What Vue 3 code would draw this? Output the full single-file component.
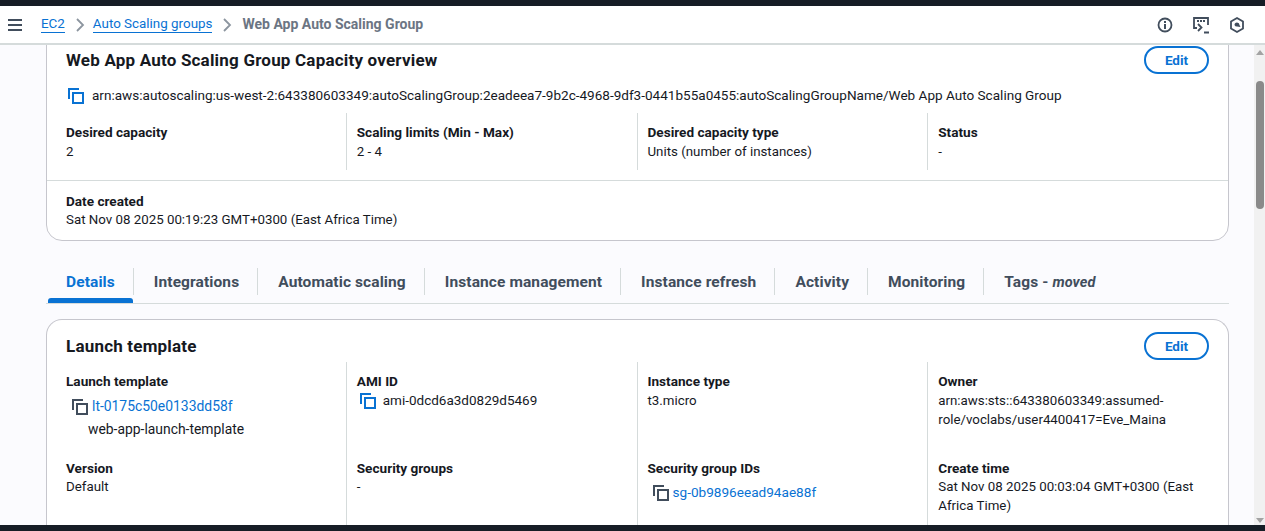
<script setup>
const overview = [
  { label: "Desired capacity", value: "2" },
  { label: "Scaling limits (Min - Max)", value: "2 - 4" },
  { label: "Desired capacity type", value: "Units (number of instances)" },
  { label: "Status", value: "-" },
];

const tabs = [
  "Details",
  "Integrations",
  "Automatic scaling",
  "Instance management",
  "Instance refresh",
  "Activity",
  "Monitoring",
];
</script>

<template>
  <div class="page">
    <div class="strip"></div>

    <header class="nav">
      <svg class="burger" width="16" height="16" viewBox="0 0 16 16">
        <path d="M1 3h14M1 8h14M1 13h14" stroke="#414d5c" stroke-width="2" fill="none" />
      </svg>
      <a class="crumb">EC2</a>
      <svg class="chev" width="16" height="16" viewBox="0 0 16 16">
        <path d="M5 2l6 6-6 6" stroke="#8c959f" stroke-width="1.800" fill="none" />
      </svg>
      <a class="crumb">Auto Scaling groups</a>
      <svg class="chev" width="16" height="16" viewBox="0 0 16 16">
        <path d="M5 2l6 6-6 6" stroke="#8c959f" stroke-width="1.800" fill="none" />
      </svg>
      <span class="crumb-current">Web App Auto Scaling Group</span>

      <div class="nav-icons">
        <svg width="18" height="18" viewBox="0 0 18 18">
          <circle cx="9" cy="9" r="6.500" stroke="#414d5c" stroke-width="1.800" fill="none" />
          <path d="M9 8v5M9 5v2" stroke="#414d5c" stroke-width="2" fill="none" />
        </svg>
        <svg width="18" height="18" viewBox="0 0 18 18">
          <path d="M5 12H2V2h14v7" stroke="#414d5c" stroke-width="1.800" fill="none" />
          <path d="M5 5h2M8 5h2M11 5h2" stroke="#414d5c" stroke-width="2" fill="none" />
          <path d="M6 8l3.500 3.500L6 15M12 16.500h5" stroke="#414d5c" stroke-width="1.800" fill="none" />
        </svg>
        <svg width="18" height="18" viewBox="0 0 18 18">
          <path d="M9 2l6 3.500v7L9 16l-6-3.500v-7z" stroke="#414d5c" stroke-width="1.800" fill="none" />
          <path d="M6.500 9a2.500 2.500 0 0 1 5 0l1 2-3.500-.5a2.500 2.500 0 0 1-2.500-1.500z" fill="#414d5c" />
        </svg>
      </div>
    </header>

    <div class="body">
      <main class="content">
        <section class="card overview">
          <div class="card-head">
            <h2>Web App Auto Scaling Group Capacity overview</h2>
            <button class="edit">Edit</button>
          </div>
          <div class="arn">
            <svg class="copy" width="16" height="16" viewBox="0 0 16 16">
              <path d="M1 11V1h10" stroke="#0972d3" stroke-width="2" fill="none" />
              <rect x="5" y="5" width="10" height="10" stroke="#0972d3" stroke-width="2" fill="none" />
            </svg>
            <span>arn:aws:autoscaling:us-west-2:643380603349:autoScalingGroup:2eadeea7-9b2c-4968-9df3-0441b55a0455:autoScalingGroupName/Web App Auto Scaling Group</span>
          </div>
          <div class="cols overview-cols">
            <div v-for="item in overview" :key="item.label" class="col">
              <div class="label">{{ item.label }}</div>
              <div class="value">{{ item.value }}</div>
            </div>
          </div>
          <div class="date">
            <div class="label">Date created</div>
            <div class="value">Sat Nov 08 2025 00:19:23 GMT+0300 (East Africa Time)</div>
          </div>
        </section>

        <nav class="tabs">
          <div v-for="(tab, i) in tabs" :key="tab" class="tab" :class="{ active: i === 0 }">{{ tab }}</div>
          <div class="tab last">Tags - <em>moved</em></div>
        </nav>

        <section class="card template">
          <div class="card-head">
            <h2>Launch template</h2>
            <button class="edit">Edit</button>
          </div>
          <div class="cols template-cols">
            <div class="col">
              <div class="label">Launch template</div>
              <div class="link-row first">
                <svg class="copy" width="16" height="16" viewBox="0 0 16 16">
                  <path d="M1 11V1h10" stroke="#414d5c" stroke-width="2" fill="none" />
                  <rect x="5" y="5" width="10" height="10" stroke="#414d5c" stroke-width="2" fill="none" />
                </svg>
                <a>lt-0175c50e0133dd58f</a>
              </div>
              <div class="value sub">web-app-launch-template</div>
            </div>
            <div class="col">
              <div class="label">AMI ID</div>
              <div class="link-row ami">
                <svg class="copy" width="16" height="16" viewBox="0 0 16 16">
                  <path d="M1 11V1h10" stroke="#0972d3" stroke-width="2" fill="none" />
                  <rect x="5" y="5" width="10" height="10" stroke="#0972d3" stroke-width="2" fill="none" />
                </svg>
                <span>ami-0dcd6a3d0829d5469</span>
              </div>
            </div>
            <div class="col">
              <div class="label">Instance type</div>
              <div class="value">t3.micro</div>
            </div>
            <div class="col">
              <div class="label">Owner</div>
              <div class="value">arn:aws:sts::643380603349:assumed-<br />role/voclabs/user4400417=Eve_Maina</div>
            </div>
            <div class="col">
              <div class="label">Version</div>
              <div class="value">Default</div>
            </div>
            <div class="col">
              <div class="label">Security groups</div>
              <div class="value">-</div>
            </div>
            <div class="col">
              <div class="label">Security group IDs</div>
              <div class="link-row sg">
                <svg class="copy" width="16" height="16" viewBox="0 0 16 16">
                  <path d="M1 11V1h10" stroke="#414d5c" stroke-width="2" fill="none" />
                  <rect x="5" y="5" width="10" height="10" stroke="#414d5c" stroke-width="2" fill="none" />
                </svg>
                <a>sg-0b9896eead94ae88f</a>
              </div>
            </div>
            <div class="col">
              <div class="label">Create time</div>
              <div class="value">Sat Nov 08 2025 00:03:04 GMT+0300 (East<br />Africa Time)</div>
            </div>
          </div>
        </section>
      </main>

      <aside class="scrollbar">
        <span class="arrow up"></span>
        <span class="thumb"></span>
        <span class="arrow down"></span>
      </aside>
    </div>

    <div class="strip"></div>
  </div>
</template>

<style>
html,
body {
  margin: 0;
  overflow: hidden;
}
</style>

<style scoped>
.page {
  width: 1265px;
  height: 531px;
  display: flex;
  flex-direction: column;
  overflow: hidden;
  background: #fbfbfe;
  color: #16191f;
  font-family: Roboto, "Liberation Sans", sans-serif;
  font-size: 13.3px;
  line-height: 19px;
}
.strip {
  height: 6px;
  flex: none;
  background: #161d26;
}
.nav {
  height: 39px;
  flex: none;
  box-sizing: border-box;
  display: flex;
  align-items: center;
  padding-left: 7px;
  background: #fff;
  border-bottom: 2px solid #d5dbdb;
  font-size: 13.4px;
}
.burger {
  margin-right: 18px;
}
.crumb {
  color: #0972d3;
  border-bottom: 1px solid #0972d3;
  line-height: 16px;
}
.chev {
  margin: 0 5px 0 7px;
}
.crumb-current {
  color: #6b7583;
  font-weight: 700;
  font-size: 14px;
  margin-left: 2px;
}
.nav-icons {
  margin-left: auto;
  margin-right: 19px;
  display: flex;
  gap: 18px;
}
.body {
  flex: 1;
  min-height: 0;
  display: flex;
  overflow: hidden;
}
.content {
  flex: 1;
  min-width: 0;
  padding: 0 25px 0 46px;
}
.card {
  box-sizing: border-box;
  background: #fff;
  border: 1px solid #c6c6cd;
  border-radius: 16px;
}
.overview {
  margin-top: -21px;
  height: 217px;
  padding-top: 21px;
}
.card-head {
  display: flex;
  justify-content: space-between;
  padding: 0 19px;
}
.card-head h2 {
  margin: 0;
  font-size: 17px;
  letter-spacing: 0.2px;
  line-height: 28px;
  font-weight: 700;
}
.edit {
  width: 65px;
  height: 28px;
  padding: 0;
  background: #fff;
  border: 2px solid #0972d3;
  border-radius: 20px;
  color: #0972d3;
  font: 700 13.5px Roboto, "Liberation Sans", sans-serif;
}
.arn {
  display: flex;
  align-items: center;
  gap: 8px;
  padding: 12px 0 0 21px;
  font-size: 13.55px;
}
.cols {
  display: grid;
  grid-template-columns: repeat(4, 1fr);
  padding: 0 10px 0 8px;
}
.col {
  padding-left: 10px;
  border-left: 1px solid #d5dbdb;
}
.col:nth-child(4n + 1) {
  padding-left: 11px;
  border-left: none;
}
.overview-cols {
  margin-top: 8px;
}
.overview-cols .col {
  height: 57px;
  padding-top: 10px;
  box-sizing: border-box;
}
.label {
  font-size: 13.6px;
  font-weight: 700;
}
.date {
  margin-top: 10px;
  padding: 11px 19px 0;
  border-top: 1px solid #d5dbdb;
}
.date .label {
  margin-bottom: -1px;
}
.tabs {
  display: flex;
  height: 35px;
  margin-top: 27px;
  border-bottom: 1px solid #d5dbdb;
}
.tab {
  height: 27px;
  padding: 5px 18px 0 20px;
  box-sizing: border-box;
  border-right: 1px solid #d5dbdb;
  color: #414d5c;
  font-size: 15.5px;
  letter-spacing: 0.1px;
  font-weight: 700;
  position: relative;
}
.tab em {
  font-size: 14.5px;
}
.tab.active {
  color: #0972d3;
}
.tab.active::after {
  content: "";
  position: absolute;
  left: 2px;
  right: 0;
  top: 30px;
  height: 5px;
  background: #0972d3;
  border-radius: 3px 3px 0 0;
}
.tab.last {
  border-right: none;
}
.template {
  margin-top: 15px;
  height: 280px;
  padding-top: 12px;
  border-bottom: none;
}
.template-cols {
  margin-top: 2px;
}
.template-cols .col {
  height: 97px;
  padding-top: 10px;
  box-sizing: border-box;
}
.template-cols .col:nth-child(n + 5) {
  height: 106px;
  padding-top: 0;
}
.template-cols .col:nth-child(n + 5) .value {
  margin-top: -1px;
}
.link-row {
  display: flex;
  align-items: center;
  gap: 4px;
  padding: 5px 0 0 6px;
  font-size: 13.9px;
}
.link-row.first {
  padding-top: 6px;
}
.link-row.sg {
  padding-left: 5px;
  font-size: 13.6px;
}
.link-row.ami {
  padding: 0 0 0 3px;
  gap: 7px;
  font-size: 13.5px;
}
.link-row a {
  color: #0972d3;
}
.sub {
  margin: 4px 0 0 22px;
  font-size: 13.9px;
}
.scrollbar {
  width: 11px;
  flex: none;
  display: flex;
  flex-direction: column;
  align-items: center;
  background: #f1f1f1;
}
.arrow {
  width: 0;
  height: 0;
  border-left: 4px solid transparent;
  border-right: 4px solid transparent;
}
.arrow.up {
  margin-top: 5px;
  border-bottom: 5px solid #a3a3a3;
}
.arrow.down {
  margin-top: auto;
  margin-bottom: 2px;
  border-top: 5px solid #a3a3a3;
}
.thumb {
  width: 8px;
  height: 128px;
  margin-top: 26px;
  border-radius: 4px;
  background: #8a8a8a;
}
</style>
